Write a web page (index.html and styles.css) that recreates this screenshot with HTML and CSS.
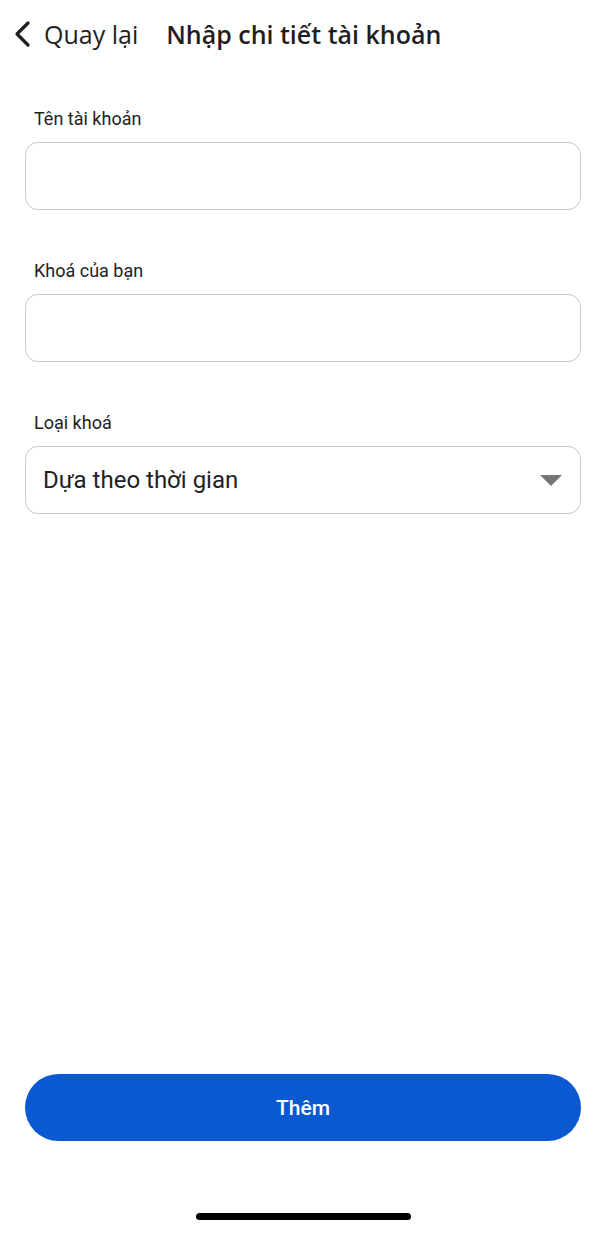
FILE: index.html
```html
<!DOCTYPE html>
<html lang="vi">
<head>
    <meta charset="UTF-8">
    <meta name="viewport" content="width=device-width, initial-scale=1.0">
    <title>Nhập chi tiết tài khoản</title>
    <link rel="stylesheet" href="styles.css">
</head>
<body>
    <div class="screen">
        <header class="topbar">
            <a class="back" href="#">
                <svg class="back-icon" width="20" height="28" viewBox="0 0 20 28">
                    <path d="M16 3 L5 14 L16 25" fill="none" stroke="#1f1f1f" stroke-width="3.2" stroke-linecap="round" stroke-linejoin="round"/>
                </svg>
                <span>Quay lại</span>
            </a>
            <h1 class="title">Nhập chi tiết tài khoản</h1>
        </header>

        <!-- Account form -->
        <form class="form">
            <div class="field">
                <label for="accountName">Tên tài khoản</label>
                <input type="text" id="accountName" class="box">
            </div>
            <div class="field">
                <label for="secretKey">Khoá của bạn</label>
                <input type="text" id="secretKey" class="box">
            </div>
            <div class="field">
                <label for="keyType">Loại khoá</label>
                <div class="box select">
                    <span>Dựa theo thời gian</span>
                    <span class="caret"></span>
                </div>
            </div>
        </form>

        <div class="actions">
            <button class="btn-primary" type="button">Thêm</button>
        </div>

        <div class="home-bar"></div>
    </div>
</body>
</html>
```

FILE: styles.css
```css
html, body {
    margin: 0;
    padding: 0;
    background: #fff;
}
body {
    font-family: Roboto, "Noto Sans", Arial, sans-serif;
    color: #1f1f1f;
}
.screen {
    height: 1233px;
    display: flex;
    flex-direction: column;
    box-sizing: border-box;
}
.topbar {
    display: flex;
    align-items: center;
    height: 67px;
    padding-left: 12px;
    font-family: "Open Sans", Roboto, sans-serif;
}
.back {
    display: flex;
    align-items: center;
    gap: 12px;
    color: #1f1f1f;
    text-decoration: none;
    font-size: 25px;
}
.back-icon {
    display: block;
}
.title {
    margin: 0 0 0 28px;
    font-size: 25px;
    font-weight: 600;
}
.form {
    padding: 41px 25px 0 25px;
    display: flex;
    flex-direction: column;
    gap: 50px;
}
.field label {
    display: block;
    font-size: 18px;
    color: #222;
    margin: 0 0 12px 9px;
    line-height: 22px;
}
.box {
    display: block;
    width: 100%;
    height: 68px;
    box-sizing: border-box;
    border: 1.5px solid #cacaca;
    border-radius: 13px;
    background: #fff;
    font: inherit;
    font-size: 24px;
    padding: 0 17px;
    outline: none;
}
.select {
    display: flex;
    align-items: center;
    justify-content: space-between;
    color: #222;
}
.caret {
    width: 0;
    height: 0;
    border-left: 11.5px solid transparent;
    border-right: 11.5px solid transparent;
    border-top: 11px solid #757575;
    margin-right: 1px;
}
.actions {
    margin-top: auto;
    padding: 0 25px;
}
.btn-primary {
    width: 100%;
    height: 67px;
    border: none;
    border-radius: 34px;
    background-color: #0b59d0;
    color: #fff;
    font-family: inherit;
    font-size: 21px;
    font-weight: 500;
    cursor: pointer;
}
.home-bar {
    width: 215px;
    height: 7px;
    border-radius: 4px;
    background: #000;
    margin: 72px auto 13px;
}
```
